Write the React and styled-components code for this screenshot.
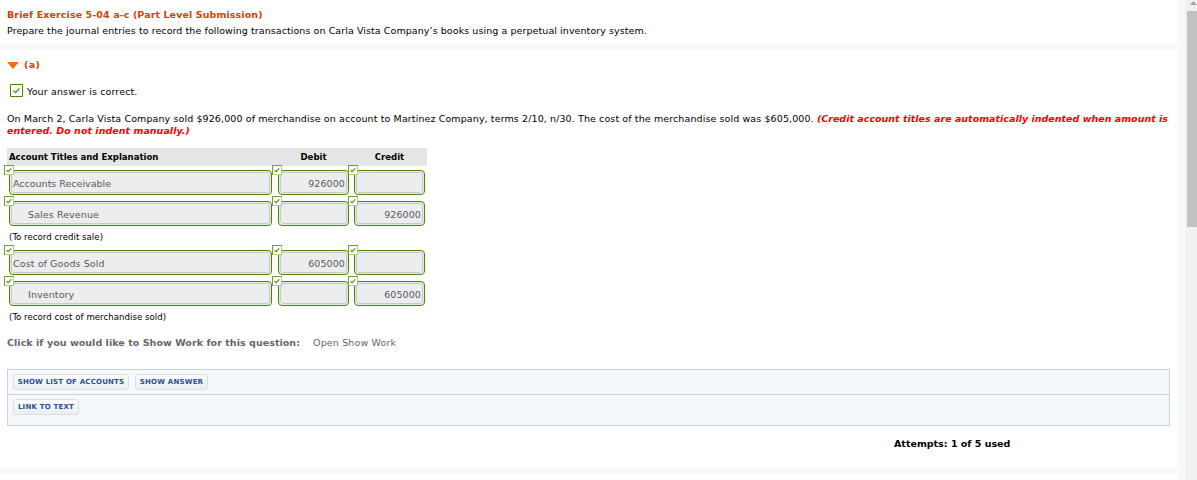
import React from 'react';
import styled, { createGlobalStyle } from 'styled-components';

const GlobalStyle = createGlobalStyle`
  * {
    box-sizing: border-box;
  }
  body {
    margin: 0;
    overflow: hidden;
    background: #f5f9fc;
    color: #000;
    font: 9.5px/12px Verdana, 'DejaVu Sans', sans-serif;
  }
`;

const Page = styled.div`
  display: flex;
  height: 480px;
`;

const Content = styled.main`
  display: flex;
  flex-direction: column;
  gap: 6px;
  width: 1178px;
  margin-right: 7px;
`;

const Panel = styled.section`
  flex: none;
  height: ${({ $height }) => $height}px;
  padding: ${({ $top }) => $top || 0}px 8px 0 7px;
  background: #fff;
`;

const Text = styled.span`
  letter-spacing: ${({ $track }) => $track ?? 0.1}px;
  white-space: nowrap;
`;

const Title = styled.h1`
  margin: 0 0 2px;
  color: #d2420a;
  font-size: 9.5px;
  line-height: 14px;
`;

const Intro = styled.p`
  margin: 0;
  line-height: 14px;
`;

const PartHeading = styled.h2`
  display: flex;
  align-items: center;
  gap: 5px;
  margin: 0;
  color: #d2420a;
  font-size: 9.5px;
  line-height: 14px;
`;

const Result = styled.div`
  display: flex;
  align-items: flex-start;
  gap: 4px;
  height: 13px;
  margin: 12px 0 0 3px;
  line-height: 15px;
`;

const Problem = styled.p`
  margin: 16px 0 0;
  line-height: 12px;
`;

const Hint = styled.em`
  color: #f00;
  font-weight: bold;
`;

const Journal = styled.div`
  width: 420px;
  margin-top: 11px;
  font-family: Tahoma, 'DejaVu Sans Condensed', 'DejaVu Sans', sans-serif;
`;

const Columns = styled.div`
  display: grid;
  grid-template-columns: 264px 71px 71px;
  column-gap: 5px;
  padding-left: 2px;
`;

const JournalHead = styled(Columns)`
  height: 18px;
  margin-bottom: 4px;
  background: #e5e5e5;
  font-weight: bold;
  line-height: 18px;

  span:not(:first-child) {
    text-align: center;
  }
`;

const JournalRow = styled(Columns)`
  column-gap: 0;
  grid-template-columns: 269px 76px 71px;
  margin-bottom: 6px;
`;

const Field = styled.div`
  position: relative;
  width: ${({ $width }) => $width}px;
  height: 25px;
  padding: 1px;
  border: 1px solid #4d8500;
  border-radius: 4px;
  box-shadow: inset 0 0 0 1px rgba(77, 133, 0, 0.15);
`;

const Value = styled.div`
  height: 21px;
  padding: 0 1px 0 ${({ $indent }) => ($indent ? 16 : 1)}px;
  border: 1px solid #c8c9cc;
  border-radius: 3px;
  background: #ecedef;
  color: #58595b;
  font-family: Verdana, 'DejaVu Sans', sans-serif;
  line-height: 21px;
  text-align: ${({ $right }) => ($right ? 'right' : 'left')};
`;

const Badge = styled.svg`
  position: absolute;
  top: -6px;
  left: ${({ $left }) => $left}px;
`;

const Note = styled.div`
  height: 12px;
  margin: -1px 0 7px 2px;
  line-height: 12px;
`;

const ShowWork = styled.div`
  display: flex;
  gap: 13px;
  margin-top: 13px;
  color: #666;
  line-height: 14px;
`;

const Toolbox = styled.div`
  width: 1163px;
  height: 57px;
  margin-top: 19px;
  border: 1px solid #c9d1dd;
  background: #f5f9fc;
`;

const ToolRow = styled.div`
  display: flex;
  gap: 6px;
  height: 24px;
  padding: 4px 5px;

  & + & {
    border-top: 1px solid #c9d1dd;
  }
`;

const Button = styled.button`
  width: ${({ $width }) => $width}px;
  height: 16px;
  padding: 0;
  border: 1px solid #d7dfe8;
  border-radius: 3px;
  background: linear-gradient(#fbfcfd, #eceef2);
  color: #2a5090;
  font: bold 7px/12px Verdana, 'DejaVu Sans', sans-serif;
  white-space: nowrap;
`;

const Attempts = styled.div`
  margin: 11px 0 0 887px;
  font-weight: bold;
  line-height: 14px;
`;

const Scrollbar = styled.aside`
  width: 12px;
  padding-left: 2px;
  background: #f1f1f1;
`;

const Arrow = styled.svg`
  display: block;
  height: 11px;
`;

const Thumb = styled.div`
  height: 216px;
  background: #c1c1c1;
`;

const entries = [
  { account: 'Accounts Receivable', track: 0, debit: '926000' },
  { account: 'Sales Revenue', credit: '926000', note: '(To record credit sale)' },
  { account: 'Cost of Goods Sold', debit: '605000' },
  { account: 'Inventory', credit: '605000', note: '(To record cost of merchandise sold)' },
];

function CheckedField({ width, left = -7, indent, right, track, children }) {
  return (
    <Field $width={width}>
      <Value $indent={indent} $right={right}>
        <Text $track={track}>{children}</Text>
      </Value>
      <Badge $left={left} width="10" height="10" viewBox="0 0 10 10">
        <path d="M0 0h10v10H0z" fill="#b5cd92" />
        <path d="M0 0h10v1H1v9H0z" fill="#6f9f38" />
        <path d="M1 1h8v8H1z" fill="#fff" />
        <path d="M2.5 5.2l1.6 1.5 3.2-3.4" fill="none" stroke="#5b9020" strokeWidth="1.2" />
      </Badge>
    </Field>
  );
}

export default function App() {
  return (
    <>
      <GlobalStyle />
      <Page>
        <Content>
          <Panel $height={44} $top={8}>
            <Title>
              <Text>Brief Exercise 5-04 a-c (Part Level Submission)</Text>
            </Title>
            <Intro>
              <Text $track={0.075}>
                Prepare the journal entries to record the following transactions on Carla Vista
                Company’s books using a perpetual inventory system.
              </Text>
            </Intro>
          </Panel>

          <Panel $height={418} $top={8}>
            <PartHeading>
              <svg width="12" height="7" viewBox="0 0 12 7">
                <path d="M0 0h12L6 7z" fill="#ff6a0d" />
              </svg>
              <Text $track={0.4}>(a)</Text>
            </PartHeading>

            <Result>
              <svg width="13" height="13" viewBox="0 0 13 13">
                <path d="M.5 .5h12v12H.5z" fill="#fff" stroke="#4d8500" />
                <path d="M3.5 6.5l2 2 4-4" fill="none" stroke="#5b9020" strokeWidth="1.3" />
              </svg>
              <Text $track={0.13}>Your answer is correct.</Text>
            </Result>

            <Problem>
              <Text $track={0.105}>
                On March 2, Carla Vista Company sold $926,000 of merchandise on account to Martinez
                Company, terms 2/10, n/30. The cost of the merchandise sold was $605,000.{' '}
              </Text>
              <Hint>
                <Text $track={0.01}>
                  (Credit account titles are automatically indented when amount is
                </Text>
                <br />
                <Text $track={0.03}>entered. Do not indent manually.)</Text>
              </Hint>
            </Problem>

            <Journal>
              <JournalHead>
                <Text $track={0}>Account Titles and Explanation</Text>
                <Text $track={0}>Debit</Text>
                <Text $track={0}>Credit</Text>
              </JournalHead>
              {entries.map(({ account, track, debit, credit, note }) => (
                <React.Fragment key={account}>
                  <JournalRow>
                    <CheckedField width={263} left={-6} indent={Boolean(credit)} track={track}>
                      {account}
                    </CheckedField>
                    <CheckedField width={71} right>
                      {debit}
                    </CheckedField>
                    <CheckedField width={71} right>
                      {credit}
                    </CheckedField>
                  </JournalRow>
                  {note && (
                    <Note>
                      <Text $track={0.06}>{note}</Text>
                    </Note>
                  )}
                </React.Fragment>
              ))}
            </Journal>

            <ShowWork>
              <b>
                <Text $track={0.05}>Click if you would like to Show Work for this question:</Text>
              </b>
              <Text $track={0.15}>Open Show Work</Text>
            </ShowWork>

            <Toolbox>
              <ToolRow>
                <Button $width={116}>
                  <Text $track={0.2}>SHOW LIST OF ACCOUNTS</Text>
                </Button>
                <Button $width={73}>
                  <Text $track={0.2}>SHOW ANSWER</Text>
                </Button>
              </ToolRow>
              <ToolRow>
                <Button $width={66}>
                  <Text $track={0.2}>LINK TO TEXT</Text>
                </Button>
              </ToolRow>
            </Toolbox>

            <Attempts>
              <Text $track={0}>Attempts: 1 of 5 used</Text>
            </Attempts>
          </Panel>

          <Panel $height={6} />
        </Content>

        <Scrollbar>
          <Arrow width="10" height="11" viewBox="0 0 10 11">
            <path d="M3 5l3.5-4L10 5z" fill="#a3a3a3" />
          </Arrow>
          <Thumb />
        </Scrollbar>
      </Page>
    </>
  );
}
